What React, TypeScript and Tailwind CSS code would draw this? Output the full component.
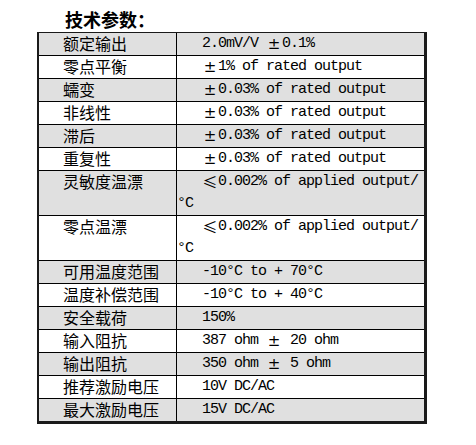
import type { ReactNode } from 'react'

/** Full-width sign (±, ≤) as the reference's SimSun draws it: one CJK cell wide. */
function Wide({ children, cjk }: { children: ReactNode; cjk?: boolean }) {
  return (
    <span
      className={
        'inline-block h-[22px] w-[16px] indent-0 text-center align-top leading-[22px] tracking-normal ' +
        (cjk ? "font-['Noto_Sans_CJK_SC',sans-serif] text-[15px]" : "font-['DejaVu_Sans',sans-serif] text-[15px]")
      }
    >
      {children}
    </span>
  )
}

const RATED = (pm: string) => (
  <>
    <Wide>±</Wide>
    {pm} of rated output
  </>
)

const APPLIED = (
  <>
    <Wide cjk>≤</Wide>0.002% of applied output/
    <br />
    °C
  </>
)

const SPECS: { label: string; value: ReactNode; tall?: boolean }[] = [
  {
    label: '额定输出',
    value: (
      <>
        2.0mV/V <Wide>±</Wide>0.1%
      </>
    ),
  },
  { label: '零点平衡', value: RATED('1%') },
  { label: '蠕变', value: RATED('0.03%') },
  { label: '非线性', value: RATED('0.03%') },
  { label: '滞后', value: RATED('0.03%') },
  { label: '重复性', value: RATED('0.03%') },
  { label: '灵敏度温漂', value: APPLIED, tall: true },
  { label: '零点温漂', value: APPLIED, tall: true },
  { label: '可用温度范围', value: '-10°C to + 70°C' },
  { label: '温度补偿范围', value: '-10°C to + 40°C' },
  { label: '安全载荷', value: '150%' },
  {
    label: '输入阻抗',
    value: (
      <>
        387 ohm <Wide>±</Wide> 20 ohm
      </>
    ),
  },
  {
    label: '输出阻抗',
    value: (
      <>
        350 ohm <Wide>±</Wide> 5 ohm
      </>
    ),
  },
  { label: '推荐激励电压', value: '10V DC/AC' },
  { label: '最大激励电压', value: '15V DC/AC' },
]

export default function App() {
  return (
    <div className="h-[445px] w-[476px] bg-white text-black">
      <div className="h-[32px] pl-[65px] pt-[10px] font-['Noto_Sans_CJK_SC',sans-serif] text-[18px] font-bold leading-[18px]">
        技术参数：
      </div>

      {/* Spec table: heavier right/bottom edge, alternating grey rows. */}
      <div className="ml-[37px] w-[390px] border-t border-r-[3px] border-b-[3px] border-l-2 border-[#1a1a1a]">
        {SPECS.map((row, i) => {
          const last = i === SPECS.length - 1
          return (
            <div
              key={row.label}
              className={
                'flex items-stretch leading-[22px] ' +
                (i % 2 === 0 ? 'bg-[#e0e0e0] ' : 'bg-white ') +
                (last ? (row.tall ? 'h-[44px]' : 'h-[22px]') : 'border-b border-black ' + (row.tall ? 'h-[45px]' : 'h-[23px]'))
              }
            >
              <div className="w-[138px] shrink-0 border-r border-black indent-[24px] font-['Noto_Sans_CJK_SC',sans-serif] text-[16px] leading-[21px]">
                {row.label}
              </div>
              <div className="flex-1 whitespace-nowrap indent-[25px] font-['Liberation_Mono',monospace] text-[15px] tracking-[-1px]">
                {row.value}
              </div>
            </div>
          )
        })}
      </div>
    </div>
  )
}
